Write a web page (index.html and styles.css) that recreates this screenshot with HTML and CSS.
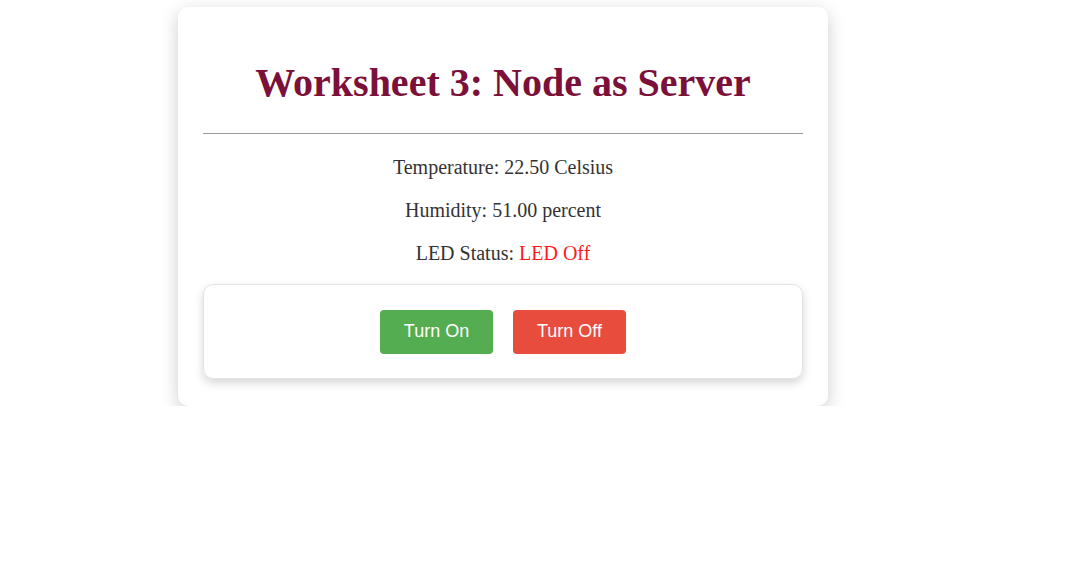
FILE: index.html
```html
<!DOCTYPE html>
<html>
<head>
<meta charset="utf-8">
<link rel="stylesheet" href="styles.css">
</head>
<body>
<div class="card">
  <h1 class="title">Worksheet 3: Node as Server</h1>
  <hr class="rule">
  <p class="reading first">Temperature: 22.50 Celsius</p>
  <p class="reading">Humidity: 51.00 percent</p>
  <p class="reading">LED Status: <span class="off">LED Off</span></p>
  <div class="controls">
    <button class="btn btn-on">Turn On</button>
    <button class="btn btn-off">Turn Off</button>
  </div>
</div>
</body>
</html>
```
FILE: styles.css
```css
html, body {
  margin: 0;
  padding: 0;
  background: #fff;
}
body {
  font-family: "Liberation Serif", "Times New Roman", serif;
  padding-top: 7px;
  padding-left: 178px;
}
.card {
  box-sizing: border-box;
  width: 650px;
  height: 399px;
  border-radius: 10px;
  box-shadow: 0 5px 18px rgba(0, 0, 0, 0.2);
  padding: 25px;
  background: #fff;
}
.title {
  margin: 28px 0 27px;
  text-align: center;
  font-size: 40px;
  font-weight: bold;
  color: #7b1038;
  line-height: 46px;
}
.rule {
  margin: 0;
  border: none;
  border-top: 1px solid #999;
}
.reading {
  text-align: center;
  font-size: 20px;
  color: #333;
  margin: 20px 0 0;
  line-height: 23px;
}
.reading.first {
  margin-top: 22px;
}
.off {
  color: #ff1a1a;
}
.controls {
  box-sizing: border-box;
  margin-top: 19px;
  border: 1px solid #e2e2e2;
  border-radius: 10px;
  box-shadow: 0 4px 10px rgba(0, 0, 0, 0.16);
  height: 95px;
  display: flex;
  justify-content: center;
  align-items: center;
  gap: 20px;
}
.btn {
  width: 113px;
  height: 44px;
  border: none;
  border-radius: 4px;
  color: #fff;
  font-family: "Liberation Sans", Arial, sans-serif;
  font-size: 18px;
  cursor: pointer;
}
.btn-on {
  background: #55ad51;
}
.btn-off {
  background: #e74c3c;
}
```
